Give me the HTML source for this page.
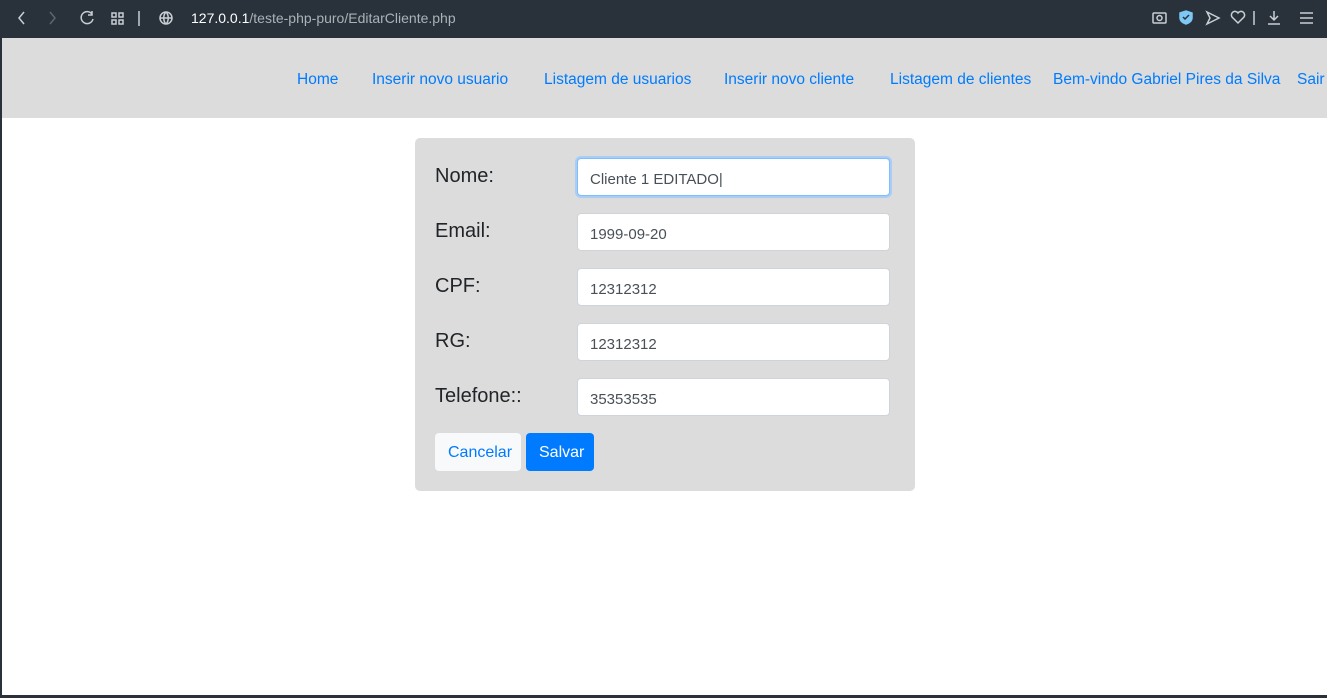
<!DOCTYPE html>
<html><head><meta charset="utf-8"><style>
*{box-sizing:border-box;margin:0;padding:0}
body{width:1327px;height:698px;overflow:hidden;background:#fff;font-family:"Liberation Sans",sans-serif;position:relative}
.chrome{position:absolute;left:0;top:0;width:1327px;height:38px;background:#29323b;color:#c9ced3}
.url{position:absolute;left:191px;top:10px;font-size:14px;color:#aab1b8}
.url b{color:#fff;font-weight:normal}
.lb{position:absolute;left:0;top:38px;width:2px;height:660px;background:#29323b}
.bb{position:absolute;left:0;top:695px;width:1327px;height:3px;background:#29323b}
.nav{position:absolute;left:2px;top:38px;width:1325px;height:80px;background:#dcdcdc}
.nav a{position:absolute;top:33px;font-size:15.5px;color:#007bff;text-decoration:none;white-space:nowrap}
.card{position:absolute;left:415px;top:138px;width:500px;height:353px;background:#dcdcdc;border-radius:5px}
.lbl{position:absolute;left:20px;font-size:20px;color:#212529}
.inp{position:absolute;left:162px;width:313px;height:38px;background:#fff;border:1px solid #ced4da;border-radius:4px;font-size:15px;color:#495057;padding:12px 12px 0}
.inp.f{border-color:#80bdff;box-shadow:0 0 0 2px #a9cdf5}
.btn{position:absolute;top:295px;height:38px;border-radius:4px;font-size:16px;padding:11px 13px 0}
</style></head><body>
<div class="chrome">
<svg width="1327" height="38" style="position:absolute;left:0;top:0" fill="none" stroke="#c9ced3" stroke-width="1.5">
<path d="M24 12l-5 6 5 6"/><path d="M50 12l5 6-5 6" stroke="#5d656d"/>
<path d="M92 14a6 6 0 1 0 1 5M92 11v4h-4"/>
<rect x="112" y="13" width="4" height="4"/><rect x="119" y="13" width="4" height="4"/><rect x="112" y="20" width="4" height="4"/><rect x="119" y="20" width="4" height="4"/>
<path d="M139 11v15"/>
<circle cx="166" cy="18" r="6"/><path d="M160 18h12M166 12c-3 3-3 9 0 12M166 12c3 3 3 9 0 12"/>
<rect x="1153" y="13" width="13" height="10" rx="1"/><circle cx="1159.5" cy="18" r="2.5"/>
<path d="M1180 13l6-2 6 2v5c0 3-3 5-6 6-3-1-6-3-6-6z" fill="#7dc8f5" stroke="#7dc8f5"/><path d="M1183 17l2 2 4-4" stroke="#29323b"/>
<path d="M1207 12l12 6-12 6 3-6z"/>
<path d="M1238 23l-6-6a3 3 0 0 1 6-4 3 3 0 0 1 6 4z"/>
<path d="M1254 11v14"/>
<path d="M1274 11v9M1270 16l4 4 4-4M1268 24h12"/>
<path d="M1300 13h13M1300 18h13M1300 23h13"/>
</svg>
<div class="url"><b>127.0.0.1</b>/teste-php-puro/EditarCliente.php</div>
</div>
<div class="lb"></div>
<div class="nav">
<a style="left:295px">Home</a>
<a style="left:370px">Inserir novo usuario</a>
<a style="left:542px">Listagem de usuarios</a>
<a style="left:722px">Inserir novo cliente</a>
<a style="left:888px">Listagem de clientes</a>
<a style="left:1051px">Bem-vindo Gabriel Pires da Silva</a>
<a style="left:1295px">Sair</a>
</div>
<div class="card">
<div class="lbl" style="top:27px">Nome:</div>
<div class="inp f" style="top:20px">Cliente 1 EDITADO|</div>
<div class="lbl" style="top:82px">Email:</div>
<div class="inp" style="top:75px">1999-09-20</div>
<div class="lbl" style="top:137px">CPF:</div>
<div class="inp" style="top:130px">12312312</div>
<div class="lbl" style="top:192px">RG:</div>
<div class="inp" style="top:185px">12312312</div>
<div class="lbl" style="top:247px">Telefone::</div>
<div class="inp" style="top:240px">35353535</div>
<div class="btn" style="left:20px;width:86px;background:#f8f9fa;color:#007bff">Cancelar</div>
<div class="btn" style="left:111px;width:68px;background:#007bff;color:#fff">Salvar</div>
</div>
<div class="bb"></div>
</body></html>
